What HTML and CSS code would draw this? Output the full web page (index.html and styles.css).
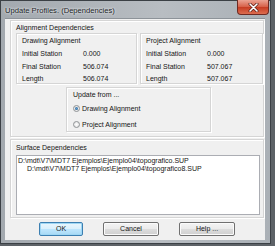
FILE: index.html
```html
<!DOCTYPE html>
<html lang="en">

<head>
	<meta charset="UTF-8">
	<meta name="viewport" content="width=device-width, initial-scale=1.0">
	<title>Update Profiles</title>
	<link rel="stylesheet" href="styles.css">
</head>

<body>
	<div class="window">
		<div class="titlebar">
			<span class="caption">Update Profiles. (Dependencies)</span>
			<div class="close">
				<svg width="11" height="9" viewBox="0 0 11 9">
					<path d="M2 1 L9 8 M9 1 L2 8" stroke="#5a1d16" stroke-width="3" stroke-linecap="round" />
					<path d="M2 1 L9 8 M9 1 L2 8" stroke="#fff" stroke-width="1.6" stroke-linecap="round" />
				</svg>
			</div>
		</div>
		<div class="client">
			<div class="group align">
				<div class="group-title">Alignment Dependencies</div>
				<div class="pair">
					<div class="box side">
						<div class="box-title">Drawing Alignment</div>
						<div class="row"><span>Initial Station</span><span>0.000</span></div>
						<div class="row"><span>Final Station</span><span>506.074</span></div>
						<div class="row"><span>Length</span><span>506.074</span></div>
					</div>
					<div class="box side">
						<div class="box-title">Project Alignment</div>
						<div class="row"><span>Initial Station</span><span>0.000</span></div>
						<div class="row"><span>Final Station</span><span>507.067</span></div>
						<div class="row"><span>Length</span><span>507.067</span></div>
					</div>
				</div>
				<div class="box update">
					<div class="box-title">Update from ...</div>
					<div class="radio on"><i></i>Drawing Alignment</div>
					<div class="radio"><i></i>Project Alignment</div>
				</div>
			</div>
			<div class="group surface">
				<div class="group-title">Surface Dependencies</div>
				<div class="list">
					<div>D:\mdt\V7\MDT7 Ejemplos\Ejemplo04\topografico.SUP</div>
					<div class="child">D:\mdt\V7\MDT7 Ejemplos\Ejemplo04\topografico8.SUP</div>
				</div>
			</div>
			<div class="buttons">
				<div class="btn ok">OK</div>
				<div class="btn">Cancel</div>
				<div class="btn">Help ...</div>
			</div>
		</div>
	</div>
</body>

</html>
```

FILE: styles.css
```css
body {
	margin: 0;
	background-color: #5d6267;
	font-family: "Liberation Sans", Arial, sans-serif;
	font-size: 7px;
	color: #151515;
}

.window {
	width: 271px;
	height: 244px;
	border: 1px solid #3b4045;
	background: linear-gradient(to right, #a3a9af, #b8bdc2 60%, #aab0b6);
	padding: 0 5px 3px 4px;
	box-sizing: border-box;
	display: flex;
	flex-direction: column;
}

.titlebar {
	height: 17px;
	display: flex;
	align-items: center;
	justify-content: space-between;
	flex-shrink: 0;
}

.caption {
	font-size: 7.6px;
	color: #1b1d1f;
	text-shadow: 0 0 3px #e6e9ec, 0 0 2px #e6e9ec;
	padding-top: 2px;
}

.close {
	width: 30px;
	height: 14px;
	align-self: flex-start;
	margin: -1px -4px 0 0;
	border: 1px solid #6e2a22;
	border-top: 0;
	border-radius: 0 0 4px 4px;
	background: linear-gradient(#eba393, #d65e46 50%, #c63b21 51%, #dc6d50);
	display: flex;
	align-items: center;
	justify-content: center;
}

/* area of the dialog */
.client {
	height: 222px;
	background-color: #f0f0f0;
	border-top: 1px solid #8d9399;
	box-sizing: border-box;
	padding: 1px 0 0 5px;
}

.group,
.box {
	border: 1px solid #d5d5d5;
	box-shadow: inset 1px 1px 0 #fff, 1px 1px 0 #fff;
	box-sizing: border-box;
}

.group-title,
.box-title {
	height: 9px;
	line-height: 9px;
}

.align {
	width: 254px;
	height: 117px;
	padding: 2px 0 0 5px;
}

.pair {
	display: flex;
	gap: 3px;
	margin-top: 1px;
}

.side {
	width: 121px;
	height: 51px;
	padding: 2px 0 0 5px;
}

.side + .side {
	width: 123px;
}

.side .box-title {
	margin-bottom: 3px;
}

.row {
	display: flex;
	height: 12.5px;
	line-height: 12.5px;
}

.row span:first-child {
	width: 61px;
}

.update {
	width: 145px;
	height: 45px;
	margin: 3px 0 0 50px;
	padding: 2px 0 0 6px;
}

.update .box-title {
	margin-bottom: 1px;
}

.radio {
	display: flex;
	align-items: center;
	height: 16px;
}

.radio i {
	width: 5px;
	height: 5px;
	border: 1px solid #8f9396;
	border-radius: 50%;
	background: radial-gradient(#ffffff, #dcdcdc);
	margin-right: 2px;
	display: flex;
	align-items: center;
	justify-content: center;
}

.radio.on i::after {
	content: "";
	width: 3px;
	height: 3px;
	border-radius: 50%;
	background: radial-gradient(#5aa0d8, #1f4f7c);
}

.surface {
	width: 254px;
	height: 79px;
	margin-top: 2px;
	padding: 3px 0 0 5px;
}

.list {
	width: 244px;
	height: 60px;
	margin-top: 3px;
	background-color: #fff;
	border: 1px solid #abadb3;
	box-sizing: border-box;
	padding: 1px 0 0 1px;
	line-height: 8px;
	white-space: nowrap;
	overflow: hidden;
}

.list .child {
	padding-left: 9px;
}

.buttons {
	display: flex;
	gap: 20px;
	margin: 4px 0 0 29px;
}

.btn {
	width: 56px;
	height: 14px;
	line-height: 12px;
	text-align: center;
	border: 1px solid #707070;
	border-radius: 2px;
	box-sizing: border-box;
	background: linear-gradient(#f4f4f4, #ebebeb 50%, #dddddd 51%, #cfcfcf);
	box-shadow: inset 0 0 0 1px #fbfbfb;
}

.btn.ok {
	width: 44px;
	border-color: #3c7fb1;
	background: linear-gradient(#eaf6fd, #d9f0fc 50%, #bee6fd 51%, #a7d9f5);
	box-shadow: inset 0 0 0 1px #9fd7f4;
}
```
